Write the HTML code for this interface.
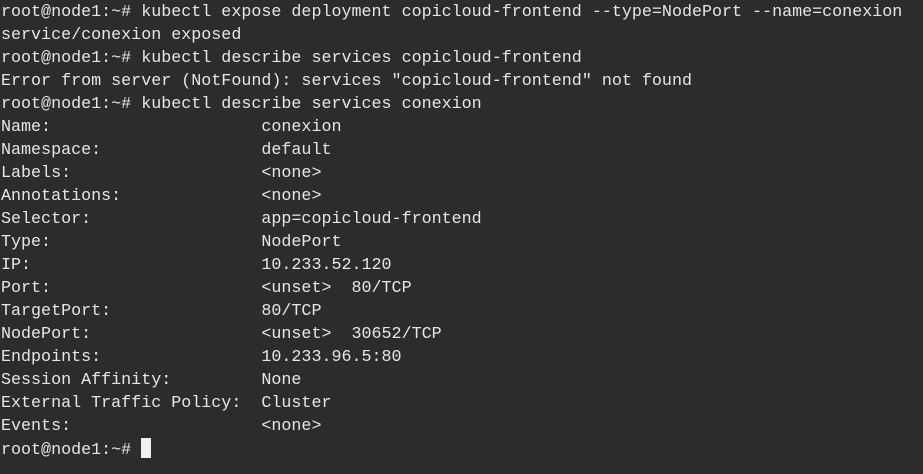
<!DOCTYPE html><html><head><style>
html,body{margin:0;padding:0;background:#2c2c2c;width:923px;height:474px;overflow:hidden}
pre{margin:0;padding:1px 0 0 1px;font-family:"Liberation Mono","DejaVu Sans Mono",monospace;font-size:16.7px;line-height:23px;color:#e6e6e6;white-space:pre}
.c{display:inline-block;width:10px;height:20px;background:#f0f0f0;vertical-align:-4px}
</style></head><body><pre>root@node1:~# kubectl expose deployment copicloud-frontend --type=NodePort --name=conexion
service/conexion exposed
root@node1:~# kubectl describe services copicloud-frontend
Error from server (NotFound): services "copicloud-frontend" not found
root@node1:~# kubectl describe services conexion
Name:                     conexion
Namespace:                default
Labels:                   &lt;none&gt;
Annotations:              &lt;none&gt;
Selector:                 app=copicloud-frontend
Type:                     NodePort
IP:                       10.233.52.120
Port:                     &lt;unset&gt;  80/TCP
TargetPort:               80/TCP
NodePort:                 &lt;unset&gt;  30652/TCP
Endpoints:                10.233.96.5:80
Session Affinity:         None
External Traffic Policy:  Cluster
Events:                   &lt;none&gt;
root@node1:~# <span class="c"></span></pre></body></html>
